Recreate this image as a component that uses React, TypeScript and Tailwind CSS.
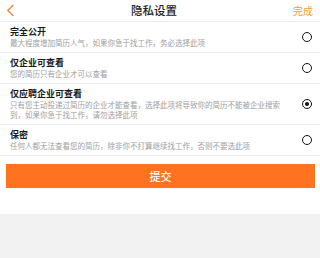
import { useState } from 'react'

const OPTIONS = [
  { key: 'public', title: '完全公开', desc: '最大程度增加简历人气，如果你急于找工作，务必选择此项' },
  { key: 'company', title: '仅企业可查看', desc: '您的简历只有企业才可以查看' },
  {
    key: 'applied',
    title: '仅应聘企业可查看',
    desc: '只有您主动投递过简历的企业才能查看，选择此项将导致你的简历不能被企业搜索到，如果你急于找工作，请勿选择此项',
  },
  { key: 'secret', title: '保密', desc: '任何人都无法查看您的简历，除非你不打算继续找工作，否则不要选此项' },
]

function Radio({ checked }: { checked: boolean }) {
  return (
    <span className="flex h-[10px] w-[10px] items-center justify-center rounded-full border-[1.5px] border-[#111]">
      {checked && <span className="h-[4.5px] w-[4.5px] rounded-full bg-[#111]" />}
    </span>
  )
}

export default function App() {
  const [selected, setSelected] = useState('applied')

  return (
    <div
      className="flex h-[258px] w-[320px] flex-col overflow-hidden bg-white"
      style={{ fontFamily: '"Noto Sans CJK SC", "Noto Sans", sans-serif' }}
    >
      <div className="flex h-[22px] shrink-0 items-center justify-between border-b border-[#ececec] pl-[6px] pr-[7px]">
        <svg width="9" height="13" viewBox="0 0 9 13" fill="none">
          <path d="M7.5 1 L1.8 6.5 L7.5 12" stroke="#f28a36" strokeWidth="1.4" />
        </svg>
        <span className="text-[11.5px] font-medium leading-none text-[#222]">隐私设置</span>
        <span className="text-[10px] leading-none text-[#f5a030]">完成</span>
      </div>

      {OPTIONS.map((opt) => (
        <button
          key={opt.key}
          onClick={() => setSelected(opt.key)}
          className="flex w-full items-center border-b border-[#ececec] pb-[4px] pl-[10px] pr-[8px] pt-[4px] text-left"
        >
          <div className="flex-1">
            <div className="text-[9px] font-bold leading-[11px] text-[#1a1a1a]">{opt.title}</div>
            <div className="mt-[1px] max-w-[272px] text-[7.5px] leading-[10px] text-[#a0a0a0]">{opt.desc}</div>
          </div>
          <Radio checked={selected === opt.key} />
        </button>
      ))}

      <div className="ml-[6px] mr-[5px] mt-[8px] flex h-[24px] items-center justify-center bg-[#ff7320] text-[11px] font-medium text-white">
        提交
      </div>

      <div className="mt-[26px] flex-1 bg-[#f2f2f2]" />
    </div>
  )
}
